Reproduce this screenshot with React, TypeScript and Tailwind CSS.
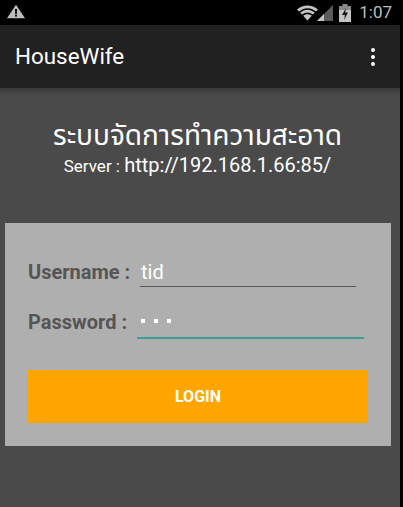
export default function App() {
    return (
        <div className="h-[507px] w-[403px] overflow-hidden bg-black pr-[3px] font-['Roboto',sans-serif]">
            {/* Status bar */}
            <div className="flex h-[25px] items-center justify-between pl-[6px] pr-[8px]">
                <svg width="20" height="15" viewBox="0 0 20 18" preserveAspectRatio="none" className="mb-[3px]">
                    <path d="M10 1 L19 17 H1 Z" fill="#bdbdbd" />
                    <rect x="9" y="6" width="2" height="6" fill="#000" />
                    <rect x="9" y="13" width="2" height="2" fill="#000" />
                </svg>
                <div className="flex items-center">
                    <svg width="21" height="16" viewBox="0 0 21 16" className="mr-[-1px]">
                        <path d="M0 4.5 C6 -1 15 -1 21 4.5 L19 6.5 C13.5 2 7.5 2 2 6.5 Z" fill="#c4c4c4" />
                        <path d="M3.2 7.7 C7.5 3.8 13.5 3.8 17.8 7.7 L16 9.6 C12.5 6.8 8.5 6.8 5 9.6 Z" fill="#c4c4c4" />
                        <path d="M6.2 10.8 C8.8 8.8 12.2 8.8 14.8 10.8 L10.5 15.5 Z" fill="#c4c4c4" />
                    </svg>
                    <svg width="16" height="17" viewBox="0 0 16 17">
                        <path d="M0 17 L16 1 V17 Z" fill="#5a5a5a" />
                        <path d="M0 17 L7 10 V17 Z" fill="#c4c4c4" />
                    </svg>
                    <svg width="12" height="18" viewBox="0 0 12 18" className="ml-[6px]">
                        <rect x="3.5" y="0" width="5" height="2" fill="#8a8a8a" />
                        <rect x="0" y="2" width="12" height="16" fill="#c4c4c4" />
                        <rect x="0" y="2" width="12" height="4" fill="#8a8a8a" />
                        <path d="M7 4 L3 11 H6 L5 16 L9 8.5 H6.2 Z" fill="#111" />
                    </svg>
                    <span className="ml-[8px] text-[17px] leading-none text-[#bdbdbd]">1:07</span>
                </div>
            </div>

            {/* App bar */}
            <div className="flex h-[63px] items-center justify-between bg-[#212121] pl-[15px] pr-[25px]">
                <span className="text-[22.4px] leading-none text-white">HouseWife</span>
                <div className="flex flex-col gap-[3px]">
                    <div className="size-[4px] rounded-full bg-white" />
                    <div className="size-[4px] rounded-full bg-white" />
                    <div className="size-[4px] rounded-full bg-white" />
                </div>
            </div>

            {/* Content */}
            <div className="h-[419px] bg-[#4a4a4a] bg-[linear-gradient(to_bottom,#3a3a3a,#4a4a4a_8px)] px-[5px] pt-[32px]">
                <div className="pr-[5px] text-center text-white">
                    <p className="h-[29px] text-[28px] leading-[29px] whitespace-nowrap font-['Noto_Sans','Noto_Sans_Thai','Roboto',sans-serif]">
                        ระบบจัดการทำความสะอาด
                    </p>
                    <p className="mt-[3px] flex h-[26px] items-baseline justify-center leading-[26px]">
                        <span className="text-[17px]">Server :&nbsp;</span>
                        <span className="text-[20px]">http://192.168.1.66:85/</span>
                    </p>
                </div>

                <div className="mt-[45px] h-[223px] w-[386px] bg-[#afafaf] px-[23px] pt-[29px]">
                    <div className="flex h-[35px] items-start">
                        <span className="w-[112px] text-[20px] leading-[40px] font-bold whitespace-nowrap text-[#555555]">Username :</span>
                        <div className="h-[35px] w-[216px] border-b border-[#555555] pl-px text-[20px] leading-[40px] text-white">tid</div>
                    </div>
                    <div className="mt-[15px] flex h-[37px] items-start">
                        <span className="w-[109px] text-[20px] leading-[40px] font-bold whitespace-nowrap text-[#555555]">Password :</span>
                        <div className="flex h-[37px] w-[227px] gap-[9px] border-b-2 border-[#3f9c90] pt-[17px] pl-[4px]">
                            <div className="size-[4px] bg-white" />
                            <div className="size-[4px] bg-white" />
                            <div className="size-[4px] bg-white" />
                        </div>
                    </div>
                    <button className="mt-[31px] block h-[53px] w-[340px] bg-[#ffa500] pt-px text-[16px] font-bold text-white">LOGIN</button>
                </div>
            </div>
        </div>
    );
}
